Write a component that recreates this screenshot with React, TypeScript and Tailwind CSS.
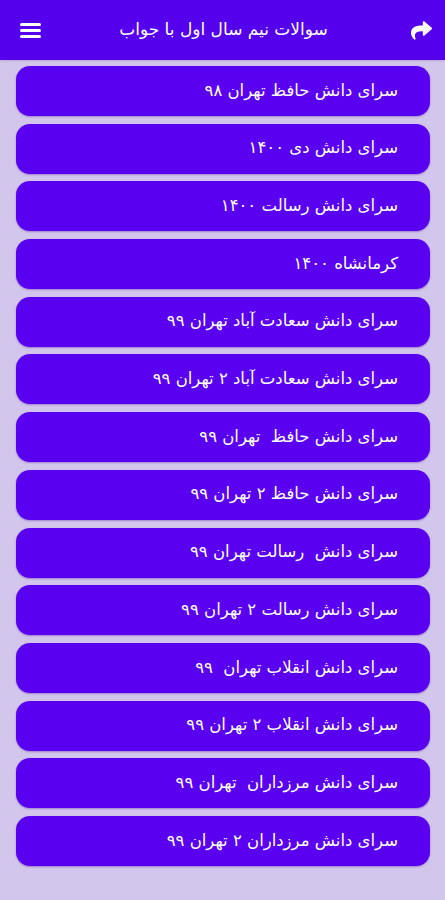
import { FaShare } from 'react-icons/fa';

const items = [
  'سرای دانش حافظ تهران ۹۸',
  'سرای دانش دی ۱۴۰۰',
  'سرای دانش رسالت ۱۴۰۰',
  'کرمانشاه ۱۴۰۰',
  'سرای دانش سعادت آباد تهران ۹۹',
  'سرای دانش سعادت آباد ۲ تهران ۹۹',
  'سرای دانش حافظ  تهران ۹۹',
  'سرای دانش حافظ ۲ تهران ۹۹',
  'سرای دانش  رسالت تهران ۹۹',
  'سرای دانش رسالت ۲ تهران ۹۹',
  'سرای دانش انقلاب تهران  ۹۹',
  'سرای دانش انقلاب ۲ تهران ۹۹',
  'سرای دانش مرزداران  تهران ۹۹',
  'سرای دانش مرزداران ۲ تهران ۹۹',
];

export default function App() {
  return (
    <div className="min-h-[900px] bg-[#d3c6ec] font-['DejaVu_Sans',sans-serif]" dir="rtl">
      <header className="h-[60px] bg-[#5500ec] flex items-center px-[13px] shadow-sm">
        <FaShare className="text-white w-[21px] h-[21px] shrink-0" />
        <h1 className="flex-1 text-center text-white text-[17px] whitespace-pre pr-[12px]">سوالات نیم سال اول با جواب</h1>
        <div className="flex flex-col gap-[3px] w-[21px] mx-[7px] shrink-0">
          <span className="h-[3px] bg-white rounded-sm" />
          <span className="h-[3px] bg-white rounded-sm" />
          <span className="h-[3px] bg-white rounded-sm" />
        </div>
      </header>

      <div className="flex flex-col gap-[7.7px] pt-[6px] pl-[16px] pr-[15px]">
        {items.map((t, i) => (
          <button
            key={i}
            className="h-[50px] bg-[#5a00f0] rounded-[14px] shadow-[0_1px_2px_rgba(60,0,150,0.35)] flex items-center pr-[32px] text-white text-[16.5px] whitespace-pre text-right"
          >
            {t}
          </button>
        ))}
      </div>
    </div>
  );
}
